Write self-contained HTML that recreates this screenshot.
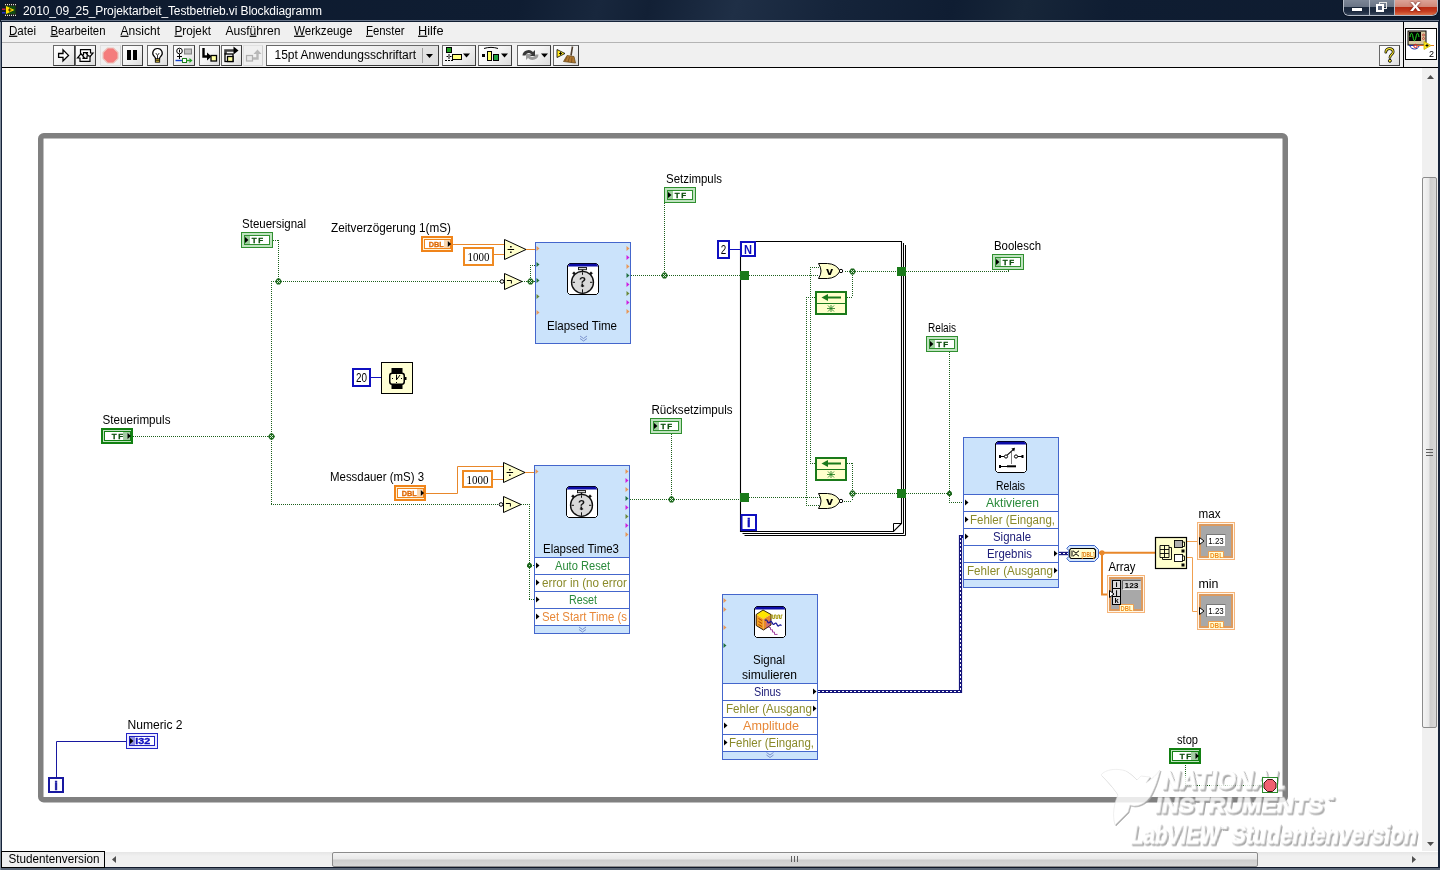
<!DOCTYPE html>
<html lang="de">
<head>
<meta charset="utf-8">
<title>2010_09_25_Projektarbeit_Testbetrieb.vi Blockdiagramm</title>
<style>
html,body{margin:0;padding:0;width:1440px;height:870px;overflow:hidden;background:#fff;font-family:"Liberation Sans", sans-serif;font-size:12px;color:#000}
#win{position:absolute;left:0;top:0;width:1440px;height:870px;background:#16233a;overflow:hidden}
#title{position:absolute;left:0;top:0;width:1440px;height:22px;background:linear-gradient(105deg,#0d1a2e 0%,#0f1d32 36%,#18273d 41.500%,#122035 45%,#1f2f46 51%,#15243a 58%,#0f1d32 66%,#172639 71%,#0f1d32 77%,#0e1b2f 100%)}
#title:after{content:"";position:absolute;left:1px;top:20px;width:1438px;height:1px;background:#6c788c}
#menubar{position:absolute;left:2px;top:22px;width:1402px;height:20px;background:#f0f0f0}
#toolbar{position:absolute;left:2px;top:42px;width:1402px;height:25px;background:#f0f0f0;border-top:1px solid #b4b4b4;box-sizing:border-box}
#blackline{position:absolute;left:2px;top:67px;width:1436px;height:1px;background:#000}
#canvas{position:absolute;left:2px;top:68px;width:1420px;height:784px;background:#fff}
svg text{font-family:"Liberation Sans", sans-serif}
#diagram,#menubar,#toolbar,#hscroll,#title,#iconpane{will-change:transform}

#botedge{position:absolute;left:0;top:868px;width:1440px;height:2px;background:#5a6676}
#leftedge{position:absolute;left:0;top:22px;width:1px;height:848px;background:#7c8898}
#title .cap{position:absolute;left:23px;top:4px;color:#fff;font-size:12px;white-space:nowrap;letter-spacing:-0.100px}
#wbtn{position:absolute;left:1343px;top:0;width:95px;height:16px;border:1px solid #b4bcc8;border-top:none;border-radius:0 0 6px 6px;box-sizing:border-box;overflow:hidden;display:flex;box-shadow:0 0 0 1px #0a1424}
#wbtn .wb{height:15px;position:relative;box-sizing:border-box}
#wbtn .min{width:26px;background:linear-gradient(#7c8696 0,#6a7586 44%,#1a283c 50%,#1e2c42 80%,#3a485c 100%);border-right:1px solid #b4bcc8}
#wbtn .max{width:25px;background:linear-gradient(#7c8696 0,#6a7586 44%,#1a283c 50%,#1e2c42 80%,#3a485c 100%);border-right:1px solid #b4bcc8}
#wbtn .cls{width:42px;background:linear-gradient(#dca498 0,#d08878 44%,#b82c14 50%,#c43c20 75%,#dc7048 100%)}
#wbtn .min i{position:absolute;left:8px;top:8px;width:10px;height:3px;background:#fff;box-shadow:0 0 1px #000}
#wbtn .max i{position:absolute;left:9px;top:2px;width:8px;height:7px;border:1.500px solid #e4e4e4;box-sizing:border-box}
#wbtn .max b{position:absolute;left:6px;top:4px;width:8px;height:8px;border:2px solid #fff;box-sizing:border-box;background:#56627a}
#wbtn .cls span{position:absolute;left:15px;top:-2px;line-height:16px;color:#fff;font-weight:bold;font-size:17px;text-shadow:0 0 2px #500;transform:scaleX(1.150);transform-origin:0 0}
#menubar .mi{position:absolute;top:1px;height:16px;line-height:16px;white-space:nowrap;font-size:12px}
.tb{position:absolute;top:2px;height:21px;box-sizing:border-box;border:1px solid;border-color:#686868 #3c3c3c #3c3c3c #686868;background:linear-gradient(135deg,#ffffff 0%,#f4f4f4 50%,#dcdcdc 100%);overflow:hidden}
.tb svg{position:absolute;left:-1px;top:-1px}
.tb.flat{border-color:#e0e0e0 #d0d0d0 #d0d0d0 #e0e0e0;background:#f0f0f0}
.tb.font span{position:absolute;left:8px;top:2px;font-size:12px;white-space:nowrap;display:inline-block;width:142px}
.tb.font em{position:absolute;left:155px;top:2px;width:1px;height:15px;background:#a0a0a0}
#iconpane{position:absolute;left:1403px;top:22px;width:35px;height:46px;background:#f0f0f0;border-left:1px solid #000;box-sizing:border-box}
#viicon{position:absolute;left:1px;top:6px;width:32px;height:32px;border:1px solid #000;background:#fff;box-sizing:border-box;overflow:hidden}
#vscroll{position:absolute;left:1422px;top:68px;width:16px;height:783px;background:#f0f0f0}
#vscroll .thumb{position:absolute;left:0;top:109px;width:15px;height:551px;border:1px solid #8c8c8c;border-radius:2px;box-sizing:border-box;background:linear-gradient(90deg,#f4f4f4 0,#e8e8e8 48%,#cdcdcd 52%,#d8d8d8 100%)}
#vscroll .thumb i{position:absolute;left:3px;top:271px;width:7px;height:7px;background:repeating-linear-gradient(#606060 0 1px,transparent 1px 3px)}
#vscroll .au{position:absolute;left:5px;top:7px}
#vscroll .ad{position:absolute;left:5px;top:774px}
#hscroll{position:absolute;left:2px;top:851px;width:1436px;height:16px;background:linear-gradient(#fff 0,#fff 1px,#e6e6e6 1px,#f0f0f0 5px,#f0f0f0 100%);border-bottom:1px solid #10182a}
#hscroll .tab{position:absolute;left:-1px;top:0;width:104px;height:17px;border:1px solid #000;box-sizing:border-box;background:#f0f0f0;overflow:hidden}
#hscroll .tab svg{position:absolute;left:0;top:-1px}
#hscroll .thumb{position:absolute;left:330px;top:1px;width:926px;height:15px;border:1px solid #8c8c8c;border-radius:2px;box-sizing:border-box;background:linear-gradient(#f4f4f4 0,#e8e8e8 48%,#cdcdcd 52%,#d8d8d8 100%)}
#hscroll .thumb i{position:absolute;left:458px;top:3px;width:7px;height:6px;background:repeating-linear-gradient(90deg,#606060 0 1px,transparent 1px 3px)}
#hscroll .al{position:absolute;left:110px;top:5px}
#hscroll .ar{position:absolute;left:1410px;top:5px}

</style>
</head>
<body>
<div id="win">
<div id="canvas"></div>
<svg id="diagram" width="1440" height="870" viewBox="0 0 1440 870" style="position:absolute;left:0;top:0">
<rect x="40.750" y="135.750" width="1244.500" height="664" rx="3" ry="3" fill="none" stroke="#808080" stroke-width="5.500"/>
<path d="M744.500 535.500H905.500V245M742.500 533.500H903.500V243" fill="none" stroke="#000" stroke-width="1"/>
<path d="M740.500 241.500H901.500V523.500L893.500 531.500H740.500z" fill="#fff" stroke="#000" stroke-width="1.100"/>
<path d="M893.500 531.500V523.500H901.500" fill="none" stroke="#000" stroke-width="1"/>
<line x1="273" y1="240.5" x2="279" y2="240.5" stroke="#1c601c" stroke-width="1" stroke-dasharray="1 1"/>
<line x1="278.5" y1="240" x2="278.5" y2="281" stroke="#1c601c" stroke-width="1" stroke-dasharray="1 1"/>
<line x1="271" y1="281.5" x2="501" y2="281.5" stroke="#1c601c" stroke-width="1" stroke-dasharray="1 1"/>
<line x1="271.5" y1="281" x2="271.5" y2="505" stroke="#1c601c" stroke-width="1" stroke-dasharray="1 1"/>
<line x1="271" y1="504.5" x2="500" y2="504.5" stroke="#1c601c" stroke-width="1" stroke-dasharray="1 1"/>
<path d="M275.0 281.5 L277.0 278.5 L280.0 278.5 L282.0 281.5 L280.0 284.5 L277.0 284.5z" fill="#1b661b"/>
<rect x="278" y="281" width="1" height="1" fill="#cfeacf"/>
<rect x="277" y="280" width="1" height="1" fill="#cfeacf"/>
<rect x="279" y="280" width="1" height="1" fill="#cfeacf"/>
<rect x="277" y="282" width="1" height="1" fill="#cfeacf"/>
<rect x="279" y="282" width="1" height="1" fill="#cfeacf"/>
<line x1="133" y1="436.5" x2="271" y2="436.5" stroke="#1c601c" stroke-width="1" stroke-dasharray="1 1"/>
<path d="M268.0 436.5 L270.0 433.5 L273.0 433.5 L275.0 436.5 L273.0 439.5 L270.0 439.5z" fill="#1b661b"/>
<rect x="271" y="436" width="1" height="1" fill="#cfeacf"/>
<rect x="270" y="435" width="1" height="1" fill="#cfeacf"/>
<rect x="272" y="435" width="1" height="1" fill="#cfeacf"/>
<rect x="270" y="437" width="1" height="1" fill="#cfeacf"/>
<rect x="272" y="437" width="1" height="1" fill="#cfeacf"/>
<path d="M453 244.5 L504 244.5" fill="none" stroke="#e8872a" stroke-width="1"/>
<path d="M494 254.5 L504 254.5" fill="none" stroke="#e8872a" stroke-width="1"/>
<path d="M525 249.5 L536 249.5" fill="none" stroke="#e8872a" stroke-width="1"/>
<line x1="522" y1="281.5" x2="536" y2="281.5" stroke="#1c601c" stroke-width="1" stroke-dasharray="1 1"/>
<line x1="530.5" y1="265" x2="530.5" y2="281" stroke="#1c601c" stroke-width="1" stroke-dasharray="1 1"/>
<line x1="530" y1="265.5" x2="536" y2="265.5" stroke="#1c601c" stroke-width="1" stroke-dasharray="1 1"/>
<path d="M527.0 281.5 L529.0 278.5 L532.0 278.5 L534.0 281.5 L532.0 284.5 L529.0 284.5z" fill="#1b661b"/>
<rect x="530" y="281" width="1" height="1" fill="#cfeacf"/>
<rect x="529" y="280" width="1" height="1" fill="#cfeacf"/>
<rect x="531" y="280" width="1" height="1" fill="#cfeacf"/>
<rect x="529" y="282" width="1" height="1" fill="#cfeacf"/>
<rect x="531" y="282" width="1" height="1" fill="#cfeacf"/>
<line x1="631" y1="275.5" x2="741" y2="275.5" stroke="#1c601c" stroke-width="1" stroke-dasharray="1 1"/>
<line x1="664.5" y1="203" x2="664.5" y2="275" stroke="#1c601c" stroke-width="1" stroke-dasharray="1 1"/>
<path d="M661.0 275.5 L663.0 272.5 L666.0 272.5 L668.0 275.5 L666.0 278.5 L663.0 278.5z" fill="#1b661b"/>
<rect x="664" y="275" width="1" height="1" fill="#cfeacf"/>
<rect x="663" y="274" width="1" height="1" fill="#cfeacf"/>
<rect x="665" y="274" width="1" height="1" fill="#cfeacf"/>
<rect x="663" y="276" width="1" height="1" fill="#cfeacf"/>
<rect x="665" y="276" width="1" height="1" fill="#cfeacf"/>
<line x1="749" y1="275.5" x2="819" y2="275.5" stroke="#1c601c" stroke-width="1" stroke-dasharray="1 1"/>
<line x1="810" y1="267.5" x2="820" y2="267.5" stroke="#1c601c" stroke-width="1" stroke-dasharray="1 1"/>
<line x1="810.5" y1="267" x2="810.5" y2="463" stroke="#1c601c" stroke-width="1" stroke-dasharray="1 1"/>
<line x1="810" y1="463.5" x2="816" y2="463.5" stroke="#1c601c" stroke-width="1" stroke-dasharray="1 1"/>
<line x1="845" y1="271.5" x2="897" y2="271.5" stroke="#1c601c" stroke-width="1" stroke-dasharray="1 1"/>
<line x1="852.5" y1="271" x2="852.5" y2="297" stroke="#1c601c" stroke-width="1" stroke-dasharray="1 1"/>
<line x1="847" y1="297.5" x2="852" y2="297.5" stroke="#1c601c" stroke-width="1" stroke-dasharray="1 1"/>
<line x1="806" y1="297.5" x2="816" y2="297.5" stroke="#1c601c" stroke-width="1" stroke-dasharray="1 1"/>
<line x1="806.5" y1="297" x2="806.5" y2="505" stroke="#1c601c" stroke-width="1" stroke-dasharray="1 1"/>
<line x1="806" y1="505.5" x2="820" y2="505.5" stroke="#1c601c" stroke-width="1" stroke-dasharray="1 1"/>
<line x1="847" y1="463.5" x2="853" y2="463.5" stroke="#1c601c" stroke-width="1" stroke-dasharray="1 1"/>
<line x1="852.5" y1="463" x2="852.5" y2="501" stroke="#1c601c" stroke-width="1" stroke-dasharray="1 1"/>
<line x1="844" y1="501.5" x2="852" y2="501.5" stroke="#1c601c" stroke-width="1" stroke-dasharray="1 1"/>
<line x1="749" y1="497.5" x2="820" y2="497.5" stroke="#1c601c" stroke-width="1" stroke-dasharray="1 1"/>
<line x1="852" y1="493.5" x2="897" y2="493.5" stroke="#1c601c" stroke-width="1" stroke-dasharray="1 1"/>
<path d="M849.0 271.5 L851.0 268.5 L854.0 268.5 L856.0 271.5 L854.0 274.5 L851.0 274.5z" fill="#1b661b"/>
<rect x="852" y="271" width="1" height="1" fill="#cfeacf"/>
<rect x="851" y="270" width="1" height="1" fill="#cfeacf"/>
<rect x="853" y="270" width="1" height="1" fill="#cfeacf"/>
<rect x="851" y="272" width="1" height="1" fill="#cfeacf"/>
<rect x="853" y="272" width="1" height="1" fill="#cfeacf"/>
<path d="M849.0 493.5 L851.0 490.5 L854.0 490.5 L856.0 493.5 L854.0 496.5 L851.0 496.5z" fill="#1b661b"/>
<rect x="852" y="493" width="1" height="1" fill="#cfeacf"/>
<rect x="851" y="492" width="1" height="1" fill="#cfeacf"/>
<rect x="853" y="492" width="1" height="1" fill="#cfeacf"/>
<rect x="851" y="494" width="1" height="1" fill="#cfeacf"/>
<rect x="853" y="494" width="1" height="1" fill="#cfeacf"/>
<line x1="906" y1="271.5" x2="1009" y2="271.5" stroke="#1c601c" stroke-width="1" stroke-dasharray="1 1"/>
<line x1="1008.5" y1="268" x2="1008.5" y2="271" stroke="#1c601c" stroke-width="1" stroke-dasharray="1 1"/>
<line x1="906" y1="493.5" x2="950" y2="493.5" stroke="#1c601c" stroke-width="1" stroke-dasharray="1 1"/>
<path d="M948.5 491.0 h2 l1.500 1.500 v2 l-1.500 1.500 h-2 l-1.500 -1.500 v-2z" fill="#1b661b"/>
<rect x="949" y="493" width="1" height="1" fill="#cfeacf"/>
<line x1="949.5" y1="352" x2="949.5" y2="502" stroke="#1c601c" stroke-width="1" stroke-dasharray="1 1"/>
<line x1="949" y1="502.5" x2="964" y2="502.5" stroke="#1c601c" stroke-width="1" stroke-dasharray="1 1"/>
<path d="M426 493.5 L457.5 493.5 L457.5 466.5 L503 466.5" fill="none" stroke="#e8872a" stroke-width="1"/>
<path d="M493 479.5 L503 479.5" fill="none" stroke="#e8872a" stroke-width="1"/>
<path d="M524 472.5 L535 472.5" fill="none" stroke="#e8872a" stroke-width="1"/>
<line x1="521" y1="504.5" x2="530" y2="504.5" stroke="#1c601c" stroke-width="1" stroke-dasharray="1 1"/>
<line x1="529.5" y1="504" x2="529.5" y2="599" stroke="#1c601c" stroke-width="1" stroke-dasharray="1 1"/>
<line x1="529" y1="599.5" x2="535" y2="599.5" stroke="#1c601c" stroke-width="1" stroke-dasharray="1 1"/>
<line x1="529" y1="565.5" x2="535" y2="565.5" stroke="#1c601c" stroke-width="1" stroke-dasharray="1 1"/>
<path d="M528.5 563.0 h2 l1.500 1.500 v2 l-1.500 1.500 h-2 l-1.500 -1.500 v-2z" fill="#1b661b"/>
<rect x="529" y="565" width="1" height="1" fill="#cfeacf"/>
<line x1="630" y1="499.5" x2="741" y2="499.5" stroke="#1c601c" stroke-width="1" stroke-dasharray="1 1"/>
<line x1="671.5" y1="434" x2="671.5" y2="499" stroke="#1c601c" stroke-width="1" stroke-dasharray="1 1"/>
<path d="M668.0 499.5 L670.0 496.5 L673.0 496.5 L675.0 499.5 L673.0 502.5 L670.0 502.5z" fill="#1b661b"/>
<rect x="671" y="499" width="1" height="1" fill="#cfeacf"/>
<rect x="670" y="498" width="1" height="1" fill="#cfeacf"/>
<rect x="672" y="498" width="1" height="1" fill="#cfeacf"/>
<rect x="670" y="500" width="1" height="1" fill="#cfeacf"/>
<rect x="672" y="500" width="1" height="1" fill="#cfeacf"/>
<path d="M370 377.5 L382 377.5" fill="none" stroke="#1010c0" stroke-width="1"/>
<path d="M730 249.5 L741 249.5" fill="none" stroke="#1010c0" stroke-width="1"/>
<path d="M56.5 778 L56.5 741.5 L127 741.5" fill="none" stroke="#1818a0" stroke-width="1"/>
<line x1="1185.5" y1="763" x2="1185.5" y2="785" stroke="#1c601c" stroke-width="1" stroke-dasharray="1 1"/>
<line x1="1185" y1="785.5" x2="1263" y2="785.5" stroke="#1c601c" stroke-width="1" stroke-dasharray="1 1"/>
<path d="M818 691.5 L960.5 691.5 L960.5 536.5 L964 536.5" fill="none" stroke="#15157c" stroke-width="3.2" stroke-linejoin="miter"/>
<path d="M818 691.5 L960.5 691.5 L960.5 536.5 L964 536.5" fill="none" stroke="#fff" stroke-width="1" stroke-dasharray="2 2"/>
<path d="M1059 553.5 L1068 553.5" fill="none" stroke="#1a1a80" stroke-width="3.4"/>
<path d="M1059 553.5 L1068 553.5" fill="none" stroke="#fff" stroke-width="1" stroke-dasharray="2 2"/>
<path d="M1099 552.75 L1156 552.75" fill="none" stroke="#e8872a" stroke-width="2"/>
<path d="M1102 552.75 L1102 594.5 L1110 594.5" fill="none" stroke="#e8872a" stroke-width="2"/>
<circle cx="1102" cy="552.750" r="2.600" fill="#e8872a"/>
<path d="M1187 541.5 L1200 541.5" fill="none" stroke="#f0a050" stroke-width="1"/>
<path d="M1187 557.5 L1192.5 557.5 L1192.5 611.5 L1200 611.5" fill="none" stroke="#f0a050" stroke-width="1"/>
<text x="242" y="227.5" font-size="12" fill="#000" text-anchor="start" font-weight="normal" textLength="64" lengthAdjust="spacingAndGlyphs">Steuersignal</text>
<rect x="241.5" y="232.5" width="31" height="15" fill="#bfe3bf" stroke="#2f8f2f" stroke-width="1"/>
<rect x="244.5" y="235.5" width="25" height="9" fill="#fff" stroke="#2f8f2f" stroke-width="1"/>
<rect x="245" y="236" width="5" height="8" fill="#9ccf9c"/>
<path d="M245 237 l3.500 3 l-3.500 3z" fill="#000"/>
<text x="251.7" y="243" font-size="8" fill="#0f500f" text-anchor="start" font-weight="bold" letter-spacing="1.600" stroke="#0f500f" stroke-width="0.300">TF</text>
<text x="102.5" y="423.5" font-size="12" fill="#000" text-anchor="start" font-weight="normal" textLength="68" lengthAdjust="spacingAndGlyphs">Steuerimpuls</text>
<rect x="102" y="429" width="30" height="14" fill="#bfe3bf" stroke="#128012" stroke-width="2"/>
<rect x="104.5" y="431.5" width="26" height="9" fill="#fff" stroke="#128012" stroke-width="1"/>
<rect x="123" y="432" width="7" height="8" fill="#a4cca4"/>
<path d="M127.5 433 l3.500 3 l-3.500 3z" fill="#000"/>
<text x="111.7" y="439" font-size="8" fill="#0f500f" text-anchor="start" font-weight="bold" letter-spacing="1.600" stroke="#0f500f" stroke-width="0.300">TF</text>
<text x="331" y="232" font-size="12" fill="#000" text-anchor="start" font-weight="normal" textLength="120" lengthAdjust="spacingAndGlyphs">Zeitverzögerung 1(mS)</text>
<rect x="422" y="237" width="30" height="14" fill="#fff2d4" stroke="#f0841a" stroke-width="2"/>
<rect x="424.5" y="239.5" width="26" height="9" fill="#fff" stroke="#f0841a" stroke-width="1"/>
<rect x="444" y="240" width="6" height="8" fill="#fad6ae"/>
<path d="M447.8 241 l3.300 3 l-3.300 3z" fill="#000"/>
<text x="428.8" y="247" font-size="8" fill="#e06800" text-anchor="start" font-weight="bold" textLength="15" lengthAdjust="spacingAndGlyphs" stroke="#e06800" stroke-width="0.300">DBL</text>
<rect x="464.0" y="248.0" width="29" height="17" fill="#fff" stroke="#ef8a22" stroke-width="2"/>
<text x="478.5" y="261.0" font-size="13.5" fill="#000" text-anchor="middle" font-weight="normal" textLength="22" lengthAdjust="spacingAndGlyphs" style="font-family:'Liberation Serif',serif">1000</text>
<path d="M504.5 239.5 L526 249.5 L504.5 259.5z" fill="#ffffcc" stroke="#000" stroke-width="1"/>
<path d="M507.6 249.5h6.500" stroke="#000" stroke-width="1"/><rect x="510.1" y="246.0" width="1.500" height="1.500" fill="#000"/><rect x="510.1" y="251.5" width="1.500" height="1.500" fill="#000"/>
<path d="M504.5 273.5 L522 281.5 L504.5 289.5z" fill="#ffffcc" stroke="#000" stroke-width="1"/>
<path d="M506.9 280.5h4.500v3" stroke="#000" stroke-width="1" fill="none"/>
<circle cx="502" cy="281.500" r="1.800" fill="#fff" stroke="#000" stroke-width="1"/>
<rect x="535.5" y="242.5" width="95" height="101" fill="#cbe3fb" stroke="#4466cc" stroke-width="1"/>
<text x="547" y="330" font-size="12" fill="#000" text-anchor="start" font-weight="normal" textLength="70" lengthAdjust="spacingAndGlyphs">Elapsed Time</text>
<path d="M569.5 263.5 H596.5 L598.5 265.5 V292.5 L596.5 294.5 H569.5 L567.5 292.5 V265.5z" fill="#fff" stroke="#000" stroke-width="1"/>
<path d="M568 266.4 V265.6 L569.7 263.7 H596.3 L598 265.6 V266.4z" fill="#0c0ca8"/>
<circle cx="582.5" cy="282.3" r="11" fill="#dadada" stroke="#101010" stroke-width="1.300"/>
<rect x="578.5" y="267.5" width="8" height="2.200" fill="#d8d8d8" stroke="#101010" stroke-width="0.900"/><path d="M582.5 269.7v2" stroke="#101010" stroke-width="1.400"/>
<path d="M572.5 273.3 l1.500 -1.500 l1.500 1.500 l-1.500 1.500z M589.5 273.3 l1.500 -1.500 l1.500 1.500 l-1.500 1.500z" fill="#101010" stroke="#101010" stroke-width="0.600"/>
<path d="M582.5 272.3v2.500M582.5 289.3v3.500M572.5 282.3h2.500M590.0 282.3h2.500" stroke="#101010" stroke-width="1"/>
<path d="M580.5 285.90000000000003 l2 -1.300 l2 1.300 l-2 1.300z" fill="#101010"/>
<text x="582.5" y="284.6" font-size="11.5" fill="#101010" text-anchor="middle" font-weight="bold">?</text>
<path d="M580.0 336 l3.500 2.500 l3.500 -2.500 M580.0 338.5 l3.500 2.500 l3.500 -2.500" fill="none" stroke="#7088c8" stroke-width="0.900"/>
<path d="M536.5 245.9 l3 2.600 l-3 2.600z" fill="#e89858"/>
<path d="M536.5 261.9 l3 2.600 l-3 2.600z" fill="#207040"/>
<path d="M536.5 277.9 l3 2.600 l-3 2.600z" fill="#207040"/>
<path d="M536.5 293.9 l3 2.600 l-3 2.600z" fill="#6a8a3a"/>
<path d="M536.5 309.9 l3 2.600 l-3 2.600z" fill="#e89858"/>
<path d="M626.5 245.9 l3 2.600 l-3 2.600z" fill="#e89858"/>
<path d="M626.5 254.9 l3 2.600 l-3 2.600z" fill="#d020e0"/>
<path d="M626.5 263.9 l3 2.600 l-3 2.600z" fill="#e89858"/>
<path d="M626.5 272.9 l3 2.600 l-3 2.600z" fill="#207040"/>
<path d="M626.5 281.9 l3 2.600 l-3 2.600z" fill="#d020e0"/>
<path d="M626.5 290.9 l3 2.600 l-3 2.600z" fill="#6a8a3a"/>
<path d="M626.5 299.9 l3 2.600 l-3 2.600z" fill="#d020e0"/>
<path d="M626.5 308.9 l3 2.600 l-3 2.600z" fill="#e89858"/>
<text x="666" y="183" font-size="12" fill="#000" text-anchor="start" font-weight="normal" textLength="56" lengthAdjust="spacingAndGlyphs">Setzimpuls</text>
<rect x="664.5" y="187.5" width="31" height="15" fill="#bfe3bf" stroke="#2f8f2f" stroke-width="1"/>
<rect x="667.5" y="190.5" width="25" height="9" fill="#fff" stroke="#2f8f2f" stroke-width="1"/>
<rect x="668" y="191" width="5" height="8" fill="#9ccf9c"/>
<path d="M668 192 l3.500 3 l-3.500 3z" fill="#000"/>
<text x="674.7" y="198" font-size="8" fill="#0f500f" text-anchor="start" font-weight="bold" letter-spacing="1.600" stroke="#0f500f" stroke-width="0.300">TF</text>
<rect x="353.0" y="369.0" width="17" height="17" fill="#fff" stroke="#1010c0" stroke-width="2"/>
<text x="361.5" y="382.0" font-size="12" fill="#000" text-anchor="middle" font-weight="normal" textLength="11" lengthAdjust="spacingAndGlyphs">20</text>
<rect x="381.500" y="362.500" width="31" height="31" fill="#ffffd4" stroke="#000" stroke-width="1"/>
<rect x="391.500" y="368" width="11" height="21" fill="#000"/><rect x="389.750" y="373.250" width="14.500" height="11" rx="2.500" fill="#ffffd4" stroke="#000" stroke-width="1.500"/><rect x="405" y="377" width="1.500" height="3" fill="#000"/>
<path d="M396.500 380v-5.500M396.800 379.500l3.200-4.500" stroke="#000" stroke-width="1" fill="none"/><rect x="392" y="378" width="1" height="1" fill="#000"/><rect x="401" y="378" width="1" height="1" fill="#000"/><rect x="396" y="382" width="1" height="1" fill="#000"/>
<rect x="718.0" y="241.0" width="11" height="17" fill="#fff" stroke="#1010c0" stroke-width="2"/>
<text x="723.5" y="254.0" font-size="12" fill="#000" text-anchor="middle" font-weight="normal" textLength="5.5" lengthAdjust="spacingAndGlyphs">2</text>
<rect x="741" y="242" width="14" height="14" fill="#fff" stroke="#1010c0" stroke-width="2"/>
<text x="748" y="253.5" font-size="12" fill="#1010c0" text-anchor="middle" font-weight="bold" textLength="8" lengthAdjust="spacingAndGlyphs">N</text>
<rect x="741.500" y="515" width="14.500" height="15" fill="#fff" stroke="#1010c0" stroke-width="2"/>
<text x="748.7" y="527" font-size="13" fill="#1010c0" text-anchor="middle" font-weight="bold" stroke="#1010c0" stroke-width="0.500">i</text>
<rect x="740" y="271" width="9" height="9" fill="#1a7a1a"/>
<rect x="897" y="267" width="9" height="9" fill="#1a7a1a"/>
<rect x="740" y="493" width="9" height="9" fill="#1a7a1a"/>
<rect x="897" y="489" width="9" height="9" fill="#1a7a1a"/>
<path d="M818.5 263.5 h9 q9 0.500 12.500 7.500 q-3.500 7 -12.500 7.500 h-9 q5 -7.500 0 -15z" fill="#ffffcc" stroke="#000" stroke-width="1"/>
<circle cx="841" cy="271" r="1.700" fill="#fff" stroke="#000" stroke-width="1"/>
<text x="829.5" y="274.5" font-size="11" fill="#000" text-anchor="middle" font-weight="bold" style="font-family:'DejaVu Sans',sans-serif">v</text>
<path d="M818.5 493.5 h9 q9 0.500 12.500 7.500 q-3.500 7 -12.500 7.500 h-9 q5 -7.500 0 -15z" fill="#ffffcc" stroke="#000" stroke-width="1"/>
<circle cx="841" cy="501" r="1.700" fill="#fff" stroke="#000" stroke-width="1"/>
<text x="829.5" y="504.5" font-size="11" fill="#000" text-anchor="middle" font-weight="bold" style="font-family:'DejaVu Sans',sans-serif">v</text>
<rect x="816" y="292" width="30" height="22" fill="#ffffcc" stroke="#1a7a1a" stroke-width="2"/>
<path d="M816 303.5h30" stroke="#1a7a1a" stroke-width="1"/>
<path d="M841 297.5h-14" stroke="#1a7a1a" stroke-width="2"/><path d="M828 294 l-6.500 3.500 l6.500 3.500z" fill="#1a7a1a"/>
<path d="M827 308.5h8M831 305v7M828 305.5l6 6M834 305.5l-6 6" stroke="#1a7a1a" stroke-width="0.800"/>
<rect x="816" y="458" width="30" height="22" fill="#ffffcc" stroke="#1a7a1a" stroke-width="2"/>
<path d="M816 469.5h30" stroke="#1a7a1a" stroke-width="1"/>
<path d="M841 463.5h-14" stroke="#1a7a1a" stroke-width="2"/><path d="M828 460 l-6.500 3.500 l6.500 3.500z" fill="#1a7a1a"/>
<path d="M827 474.5h8M831 471v7M828 471.5l6 6M834 471.5l-6 6" stroke="#1a7a1a" stroke-width="0.800"/>
<text x="994" y="250" font-size="12" fill="#000" text-anchor="start" font-weight="normal" textLength="47" lengthAdjust="spacingAndGlyphs">Boolesch</text>
<rect x="992.5" y="254.5" width="31" height="15" fill="#bfe3bf" stroke="#2f8f2f" stroke-width="1"/>
<rect x="995.5" y="257.5" width="25" height="9" fill="#fff" stroke="#2f8f2f" stroke-width="1"/>
<rect x="996" y="258" width="5" height="8" fill="#9ccf9c"/>
<path d="M996 259 l3.500 3 l-3.500 3z" fill="#000"/>
<text x="1002.7" y="265" font-size="8" fill="#0f500f" text-anchor="start" font-weight="bold" letter-spacing="1.600" stroke="#0f500f" stroke-width="0.300">TF</text>
<text x="928" y="331.5" font-size="12" fill="#000" text-anchor="start" font-weight="normal" textLength="28" lengthAdjust="spacingAndGlyphs">Relais</text>
<rect x="926.5" y="336.5" width="31" height="15" fill="#bfe3bf" stroke="#2f8f2f" stroke-width="1"/>
<rect x="929.5" y="339.5" width="25" height="9" fill="#fff" stroke="#2f8f2f" stroke-width="1"/>
<rect x="930" y="340" width="5" height="8" fill="#9ccf9c"/>
<path d="M930 341 l3.500 3 l-3.500 3z" fill="#000"/>
<text x="936.7" y="347" font-size="8" fill="#0f500f" text-anchor="start" font-weight="bold" letter-spacing="1.600" stroke="#0f500f" stroke-width="0.300">TF</text>
<text x="651.5" y="413.5" font-size="12" fill="#000" text-anchor="start" font-weight="normal" textLength="81" lengthAdjust="spacingAndGlyphs">Rücksetzimpuls</text>
<rect x="650.5" y="418.5" width="31" height="15" fill="#bfe3bf" stroke="#2f8f2f" stroke-width="1"/>
<rect x="653.5" y="421.5" width="25" height="9" fill="#fff" stroke="#2f8f2f" stroke-width="1"/>
<rect x="654" y="422" width="5" height="8" fill="#9ccf9c"/>
<path d="M654 423 l3.500 3 l-3.500 3z" fill="#000"/>
<text x="660.7" y="429" font-size="8" fill="#0f500f" text-anchor="start" font-weight="bold" letter-spacing="1.600" stroke="#0f500f" stroke-width="0.300">TF</text>
<text x="330" y="480.5" font-size="12" fill="#000" text-anchor="start" font-weight="normal" textLength="94" lengthAdjust="spacingAndGlyphs">Messdauer (mS) 3</text>
<rect x="395" y="486" width="30" height="14" fill="#fff2d4" stroke="#f0841a" stroke-width="2"/>
<rect x="397.5" y="488.5" width="26" height="9" fill="#fff" stroke="#f0841a" stroke-width="1"/>
<rect x="417" y="489" width="6" height="8" fill="#fad6ae"/>
<path d="M420.8 490 l3.300 3 l-3.300 3z" fill="#000"/>
<text x="401.8" y="496" font-size="8" fill="#e06800" text-anchor="start" font-weight="bold" textLength="15" lengthAdjust="spacingAndGlyphs" stroke="#e06800" stroke-width="0.300">DBL</text>
<rect x="463.0" y="471.0" width="29" height="16" fill="#fff" stroke="#ef8a22" stroke-width="2"/>
<text x="477.5" y="483.5" font-size="13.5" fill="#000" text-anchor="middle" font-weight="normal" textLength="22" lengthAdjust="spacingAndGlyphs" style="font-family:'Liberation Serif',serif">1000</text>
<path d="M503.5 462.5 L525 472.5 L503.5 482.5z" fill="#ffffcc" stroke="#000" stroke-width="1"/>
<path d="M506.6 472.5h6.500" stroke="#000" stroke-width="1"/><rect x="509.1" y="469.0" width="1.500" height="1.500" fill="#000"/><rect x="509.1" y="474.5" width="1.500" height="1.500" fill="#000"/>
<path d="M503.5 496.5 L521 504.5 L503.5 512.5z" fill="#ffffcc" stroke="#000" stroke-width="1"/>
<path d="M505.9 503.5h4.500v3" stroke="#000" stroke-width="1" fill="none"/>
<circle cx="501" cy="504.500" r="1.800" fill="#fff" stroke="#000" stroke-width="1"/>
<rect x="534.5" y="465.5" width="95" height="168" fill="#cbe3fb" stroke="#4466cc" stroke-width="1"/>
<rect x="534.5" y="557.5" width="95" height="17" fill="#fff" stroke="#4466cc" stroke-width="1"/>
<text x="555" y="570" font-size="12" fill="#2a8a3a" text-anchor="start" font-weight="normal" textLength="55" lengthAdjust="spacingAndGlyphs">Auto Reset</text>
<path d="M536 562.5 l3.500 3 l-3.500 3z" fill="#000"/>
<rect x="534.5" y="574.5" width="95" height="17" fill="#fff" stroke="#4466cc" stroke-width="1"/>
<text x="542" y="587" font-size="12" fill="#8a8a2a" text-anchor="start" font-weight="normal" textLength="85" lengthAdjust="spacingAndGlyphs">error in (no error</text>
<path d="M536 579.5 l3.500 3 l-3.500 3z" fill="#000"/>
<rect x="534.5" y="591.5" width="95" height="17" fill="#fff" stroke="#4466cc" stroke-width="1"/>
<text x="569" y="604" font-size="12" fill="#2a8a3a" text-anchor="start" font-weight="normal" textLength="28" lengthAdjust="spacingAndGlyphs">Reset</text>
<path d="M536 596.5 l3.500 3 l-3.500 3z" fill="#000"/>
<rect x="534.5" y="608.5" width="95" height="17" fill="#fff" stroke="#4466cc" stroke-width="1"/>
<text x="542" y="621" font-size="12" fill="#e88838" text-anchor="start" font-weight="normal" textLength="85" lengthAdjust="spacingAndGlyphs">Set Start Time (s</text>
<path d="M536 613.5 l3.500 3 l-3.500 3z" fill="#000"/>
<text x="543" y="553" font-size="12" fill="#000" text-anchor="start" font-weight="normal" textLength="76" lengthAdjust="spacingAndGlyphs">Elapsed Time3</text>
<path d="M568.5 486.5 H595.5 L597.5 488.5 V515.5 L595.5 517.5 H568.5 L566.5 515.5 V488.5z" fill="#fff" stroke="#000" stroke-width="1"/>
<path d="M567 489.4 V488.6 L568.7 486.7 H595.3 L597 488.6 V489.4z" fill="#0c0ca8"/>
<circle cx="581.5" cy="505.3" r="11" fill="#dadada" stroke="#101010" stroke-width="1.300"/>
<rect x="577.5" y="490.5" width="8" height="2.200" fill="#d8d8d8" stroke="#101010" stroke-width="0.900"/><path d="M581.5 492.7v2" stroke="#101010" stroke-width="1.400"/>
<path d="M571.5 496.3 l1.500 -1.500 l1.500 1.500 l-1.500 1.500z M588.5 496.3 l1.500 -1.500 l1.500 1.500 l-1.500 1.500z" fill="#101010" stroke="#101010" stroke-width="0.600"/>
<path d="M581.5 495.3v2.500M581.5 512.3v3.500M571.5 505.3h2.500M589.0 505.3h2.500" stroke="#101010" stroke-width="1"/>
<path d="M579.5 508.90000000000003 l2 -1.300 l2 1.300 l-2 1.300z" fill="#101010"/>
<text x="581.5" y="507.6" font-size="11.5" fill="#101010" text-anchor="middle" font-weight="bold">?</text>
<path d="M579.0 627 l3.500 2.500 l3.500 -2.500 M579.0 629.5 l3.500 2.500 l3.500 -2.500" fill="none" stroke="#7088c8" stroke-width="0.900"/>
<path d="M535.5 468.9 l3 2.600 l-3 2.600z" fill="#e89858"/>
<path d="M625.5 468.9 l3 2.600 l-3 2.600z" fill="#e89858"/>
<path d="M625.5 477.9 l3 2.600 l-3 2.600z" fill="#d020e0"/>
<path d="M625.5 486.9 l3 2.600 l-3 2.600z" fill="#e89858"/>
<path d="M625.5 495.9 l3 2.600 l-3 2.600z" fill="#207040"/>
<path d="M625.5 504.9 l3 2.600 l-3 2.600z" fill="#d020e0"/>
<path d="M625.5 513.9 l3 2.600 l-3 2.600z" fill="#6a8a3a"/>
<path d="M625.5 522.9 l3 2.600 l-3 2.600z" fill="#d020e0"/>
<path d="M625.5 531.9 l3 2.600 l-3 2.600z" fill="#e89858"/>
<rect x="722.5" y="594.5" width="95" height="165" fill="#cbe3fb" stroke="#4466cc" stroke-width="1"/>
<rect x="722.5" y="683.5" width="95" height="17" fill="#fff" stroke="#4466cc" stroke-width="1"/>
<text x="754" y="696" font-size="12" fill="#20207a" text-anchor="start" font-weight="normal" textLength="27" lengthAdjust="spacingAndGlyphs">Sinus</text>
<path d="M813 688.5 l3.500 3 l-3.500 3z" fill="#000"/>
<rect x="722.5" y="700.5" width="95" height="17" fill="#fff" stroke="#4466cc" stroke-width="1"/>
<text x="726" y="713" font-size="12" fill="#8a8a2a" text-anchor="start" font-weight="normal" textLength="86" lengthAdjust="spacingAndGlyphs">Fehler (Ausgang</text>
<path d="M813 705.5 l3.500 3 l-3.500 3z" fill="#000"/>
<rect x="722.5" y="717.5" width="95" height="17" fill="#fff" stroke="#4466cc" stroke-width="1"/>
<text x="743" y="730" font-size="12" fill="#e88838" text-anchor="start" font-weight="normal" textLength="56" lengthAdjust="spacingAndGlyphs">Amplitude</text>
<path d="M724 722.5 l3.500 3 l-3.500 3z" fill="#000"/>
<rect x="722.5" y="734.5" width="95" height="17" fill="#fff" stroke="#4466cc" stroke-width="1"/>
<text x="729" y="747" font-size="12" fill="#8a8a2a" text-anchor="start" font-weight="normal" textLength="85" lengthAdjust="spacingAndGlyphs">Fehler (Eingang,</text>
<path d="M724 739.5 l3.500 3 l-3.500 3z" fill="#000"/>
<text x="753" y="664" font-size="12" fill="#000" text-anchor="start" font-weight="normal" textLength="32" lengthAdjust="spacingAndGlyphs">Signal</text>
<text x="742" y="679" font-size="12" fill="#000" text-anchor="start" font-weight="normal" textLength="55" lengthAdjust="spacingAndGlyphs">simulieren</text>
<path d="M756.5 606.5 H783.5 L785.5 608.5 V635.5 L783.5 637.5 H756.5 L754.5 635.5 V608.5z" fill="#fff" stroke="#000" stroke-width="1"/>
<path d="M755 609.4 V608.6 L756.7 606.7 H783.3 L785 608.6 V609.4z" fill="#0c0ca8"/>
<path d="M763 610 L771 614.500 L763.500 619 L756.200 614.500z" fill="#ffe400"/>
<path d="M756.200 614.500 L763.500 619 V630 L756.200 625.500z" fill="#f2a020"/>
<path d="M763.500 619 L771 614.500 V625 L763.500 630z" fill="#e88828"/>
<path d="M766 622 L771 619 V625 L766 628.500z" fill="#c060a0" opacity="0.600"/>
<path d="M763 610 L771 614.500 V625 L763.500 630 L756.200 625.500 V614.500z" fill="none" stroke="#201000" stroke-width="0.900"/>
<path d="M758.500 618.500l3.500 2M758.500 621.500l3.500 2M758.500 624.500l3.500 2" stroke="#b04000" stroke-width="1"/>
<path d="M771 618.500v-3.500h1.700v3.500h1.700v-3.500h1.700v3.500h1.700v-3.500h1.700v3.500h1.700v-3.500h1.300" fill="none" stroke="#a89a10" stroke-width="1"/>
<path d="M765 620.500 q1.500 -1.500 2.500 1 t2.500 0.500 q1.300 -1.500 2.300 1 t2.400 0.600 q1.300 -1.500 2.300 1 t2.400 0.600 q1.200 -1 2 0.500" fill="none" stroke="#181898" stroke-width="1.300"/>
<path d="M768.500 627.500h2v2.300h2v2.300h2v2.300h3" fill="none" stroke="#a040a0" stroke-width="1"/>
<path d="M766.5 752.5 l3.500 2.500 l3.500 -2.500 M766.5 755.0 l3.500 2.500 l3.500 -2.500" fill="none" stroke="#7088c8" stroke-width="0.900"/>
<path d="M723.5 597.9 l3 2.600 l-3 2.600z" fill="#e89858"/>
<path d="M723.5 606.9 l3 2.600 l-3 2.600z" fill="#e89858"/>
<path d="M723.5 624.9 l3 2.600 l-3 2.600z" fill="#e89858"/>
<path d="M723.5 642.9 l3 2.600 l-3 2.600z" fill="#207040"/>
<rect x="963.5" y="437.5" width="95" height="150" fill="#cbe3fb" stroke="#4466cc" stroke-width="1"/>
<rect x="963.5" y="494.5" width="95" height="17" fill="#fff" stroke="#4466cc" stroke-width="1"/>
<text x="986" y="507" font-size="12" fill="#2a8a3a" text-anchor="start" font-weight="normal" textLength="53" lengthAdjust="spacingAndGlyphs">Aktivieren</text>
<path d="M965 499.5 l3.500 3 l-3.500 3z" fill="#000"/>
<rect x="963.5" y="511.5" width="95" height="17" fill="#fff" stroke="#4466cc" stroke-width="1"/>
<text x="970" y="524" font-size="12" fill="#8a8a2a" text-anchor="start" font-weight="normal" textLength="85" lengthAdjust="spacingAndGlyphs">Fehler (Eingang,</text>
<path d="M965 516.5 l3.500 3 l-3.500 3z" fill="#000"/>
<rect x="963.5" y="528.5" width="95" height="17" fill="#fff" stroke="#4466cc" stroke-width="1"/>
<text x="993" y="541" font-size="12" fill="#20207a" text-anchor="start" font-weight="normal" textLength="38" lengthAdjust="spacingAndGlyphs">Signale</text>
<path d="M965 533.5 l3.500 3 l-3.500 3z" fill="#000"/>
<rect x="963.5" y="545.5" width="95" height="17" fill="#fff" stroke="#4466cc" stroke-width="1"/>
<text x="987" y="558" font-size="12" fill="#20207a" text-anchor="start" font-weight="normal" textLength="45" lengthAdjust="spacingAndGlyphs">Ergebnis</text>
<path d="M1054 550.5 l3.500 3 l-3.500 3z" fill="#000"/>
<rect x="963.5" y="562.5" width="95" height="17" fill="#fff" stroke="#4466cc" stroke-width="1"/>
<text x="967" y="575" font-size="12" fill="#8a8a2a" text-anchor="start" font-weight="normal" textLength="86" lengthAdjust="spacingAndGlyphs">Fehler (Ausgang</text>
<path d="M1054 567.5 l3.500 3 l-3.500 3z" fill="#000"/>
<text x="996" y="490" font-size="12" fill="#000" text-anchor="start" font-weight="normal" textLength="29" lengthAdjust="spacingAndGlyphs">Relais</text>
<path d="M997.5 441.5 H1024.5 L1026.5 443.5 V470.5 L1024.5 472.5 H997.5 L995.5 470.5 V443.5z" fill="#fff" stroke="#000" stroke-width="1"/>
<path d="M996 444.4 V443.6 L997.7 441.7 H1024.3 L1026 443.6 V444.4z" fill="#0c0ca8"/>
<path d="M1000 456.500h4.500M1017.500 456.500h5M1000 466.500h7.500" stroke="#000" stroke-width="1" fill="none"/>
<path d="M1007 466.300h9" stroke="#000" stroke-width="2"/>
<circle cx="1006" cy="456.500" r="1.600" fill="#fff" stroke="#000" stroke-width="1"/><circle cx="1016" cy="456.500" r="1.600" fill="#fff" stroke="#000" stroke-width="1"/>
<path d="M1007.200 455.200L1014 448.800" stroke="#000" stroke-width="1.100"/><path d="M1015 447.800l-3.600 0.800 2.800 2.800z" fill="#000"/>
<path d="M1011.500 452.500v11.500" stroke="#000" stroke-width="1" stroke-dasharray="1 1"/>
<rect x="999" y="455" width="2" height="3" fill="#000"/><rect x="1021.500" y="455" width="2" height="3" fill="#000"/><rect x="999" y="465" width="2" height="3" fill="#000"/>
<path d="M1069.500 545.500H1094.500L1098.500 549.500V557.500L1094.500 561.500H1069.500L1066.800 558.700L1068.800 556.500V550.500L1066.800 548.300z" fill="#d4e6fc" stroke="#3a62c8" stroke-width="1"/>
<path d="M1071 548.500H1094L1095.500 550V557L1094 558.500H1071L1069.700 557V550z" fill="#ffffd0" stroke="#000" stroke-width="1.100"/>
<path d="M1073 550.800l3 2.300 3-2.300M1073 556.200l3-2.300 3 2.300M1072 550.500v6" fill="none" stroke="#000" stroke-width="1"/>
<text x="1081.5" y="556.8" font-size="8" fill="#e07808" text-anchor="start" font-weight="bold" textLength="13" lengthAdjust="spacingAndGlyphs">[DBL]</text>
<rect x="1155.500" y="537.500" width="31" height="31" fill="#ffffcc" stroke="#000" stroke-width="1.200"/>
<path d="M1160 545.500h9v12h-9zM1160 549.500h9M1160 553.500h9M1164.500 545.500v12M1169 547.500h2.500v12h-9v-2" fill="none" stroke="#000" stroke-width="0.900"/>
<rect x="1174.500" y="540.500" width="8" height="7" fill="#b0b0b0" stroke="#000" stroke-width="0.900"/><path d="M1182.500 542h2v4.500h-2" fill="none" stroke="#000" stroke-width="0.900"/><rect x="1181.500" y="549.500" width="3" height="3" fill="#000"/>
<rect x="1174.500" y="554.500" width="8" height="7" fill="#fff" stroke="#000" stroke-width="0.900"/><path d="M1182.500 556h2v4.500h-2" fill="none" stroke="#000" stroke-width="0.900"/><rect x="1181.500" y="563.500" width="3" height="3" fill="#000"/>
<text x="1108.5" y="571" font-size="12" fill="#000" text-anchor="start" font-weight="normal" textLength="27" lengthAdjust="spacingAndGlyphs">Array</text>
<rect x="1107.5" y="575.5" width="37" height="37" fill="#fff6ea" stroke="#f6b478" stroke-width="1"/>
<rect x="1110" y="578" width="32" height="32" fill="#a8a8a8" stroke="#dc9a5e" stroke-width="2"/>
<rect x="1120" y="604.5" width="13" height="7" fill="#ffffd8"/>
<path d="M1119.5 611 v-6.500 h14 v6.500" fill="none" stroke="#f0a050" stroke-width="1"/>
<text x="1120.5" y="611" font-size="7.5" fill="#f08c1c" text-anchor="start" font-weight="bold" textLength="12" lengthAdjust="spacingAndGlyphs">DBL</text>
<rect x="1112.5" y="580.5" width="8" height="8" fill="#dcdcdc" stroke="#000" stroke-width="1"/>
<text x="1116.5" y="587" font-size="7.5" fill="#000" text-anchor="middle" font-weight="bold">i</text>
<rect x="1112.5" y="588.5" width="8" height="8" fill="#dcdcdc" stroke="#000" stroke-width="1"/>
<text x="1116.5" y="595" font-size="7.5" fill="#000" text-anchor="middle" font-weight="bold">j</text>
<rect x="1112.5" y="596.5" width="8" height="8" fill="#dcdcdc" stroke="#000" stroke-width="1"/>
<text x="1116.5" y="603" font-size="7.5" fill="#000" text-anchor="middle" font-weight="bold">k</text>
<path d="M1122.5 589 v-8.500 h18" fill="none" stroke="#606060" stroke-width="1"/>
<rect x="1123" y="581" width="18" height="8" fill="#cccccc"/><path d="M1123 589.5h18" stroke="#e8e8e8" stroke-width="1"/>
<text x="1124.5" y="588" font-size="7.5" fill="#000" text-anchor="start" font-weight="bold" textLength="14" lengthAdjust="spacingAndGlyphs">123</text>
<path d="M1109.5 590.5 l4.500 3.500 l-4.500 3.500z" fill="#fff" stroke="#000" stroke-width="1"/>
<text x="1198.5" y="517.5" font-size="12" fill="#000" text-anchor="start" font-weight="normal" textLength="22" lengthAdjust="spacingAndGlyphs">max</text>
<rect x="1197.5" y="522.5" width="37" height="37" fill="#fff6ea" stroke="#f6b478" stroke-width="1"/>
<rect x="1200" y="525" width="32" height="32" fill="#a8a8a8" stroke="#dc9a5e" stroke-width="2"/>
<rect x="1209" y="551.5" width="15" height="7" fill="#ffffd8"/>
<path d="M1208.5 558 v-6.500 h15 v6.500" fill="none" stroke="#f0a050" stroke-width="1"/>
<text x="1210" y="558" font-size="7.5" fill="#f08c1c" text-anchor="start" font-weight="bold" textLength="13" lengthAdjust="spacingAndGlyphs">DBL</text>
<path d="M1206.5 547 v-12.500 h19" fill="none" stroke="#787878" stroke-width="1"/>
<rect x="1207" y="535" width="18" height="11" fill="#fff"/>
<text x="1208.3" y="544" font-size="9.5" fill="#000" text-anchor="start" font-weight="normal" textLength="15.5" lengthAdjust="spacingAndGlyphs">1.23</text>
<path d="M1199.5 537.5 l4.500 3.500 l-4.500 3.500z" fill="#fff" stroke="#000" stroke-width="1"/>
<text x="1198.5" y="588" font-size="12" fill="#000" text-anchor="start" font-weight="normal" textLength="20" lengthAdjust="spacingAndGlyphs">min</text>
<rect x="1197.5" y="592.5" width="37" height="37" fill="#fff6ea" stroke="#f6b478" stroke-width="1"/>
<rect x="1200" y="595" width="32" height="32" fill="#a8a8a8" stroke="#dc9a5e" stroke-width="2"/>
<rect x="1209" y="621.5" width="15" height="7" fill="#ffffd8"/>
<path d="M1208.5 628 v-6.500 h15 v6.500" fill="none" stroke="#f0a050" stroke-width="1"/>
<text x="1210" y="628" font-size="7.5" fill="#f08c1c" text-anchor="start" font-weight="bold" textLength="13" lengthAdjust="spacingAndGlyphs">DBL</text>
<path d="M1206.5 617 v-12.500 h19" fill="none" stroke="#787878" stroke-width="1"/>
<rect x="1207" y="605" width="18" height="11" fill="#fff"/>
<text x="1208.3" y="614" font-size="9.5" fill="#000" text-anchor="start" font-weight="normal" textLength="15.5" lengthAdjust="spacingAndGlyphs">1.23</text>
<path d="M1199.5 607.5 l4.500 3.500 l-4.500 3.500z" fill="#fff" stroke="#000" stroke-width="1"/>
<text x="127.5" y="728.5" font-size="12" fill="#000" text-anchor="start" font-weight="normal" textLength="55" lengthAdjust="spacingAndGlyphs">Numeric 2</text>
<rect x="126.500" y="733.500" width="31" height="15" fill="#ececff" stroke="#2424c4" stroke-width="1"/>
<rect x="129.500" y="736.500" width="25" height="9" fill="#fff" stroke="#2020c0" stroke-width="1"/><rect x="130" y="737" width="5" height="8" fill="#9090e0"/>
<path d="M130 738 l3.500 3 l-3.500 3z" fill="#000"/>
<text x="135.3" y="743.9" font-size="8.5" fill="#1010c0" text-anchor="start" font-weight="bold" textLength="15" lengthAdjust="spacingAndGlyphs" stroke="#1010c0" stroke-width="0.300">I32</text>
<rect x="49" y="778" width="14" height="14" fill="#fff" stroke="#1818a0" stroke-width="2"/>
<text x="56" y="789.5" font-size="13" fill="#1818a0" text-anchor="middle" font-weight="bold" stroke="#1818a0" stroke-width="0.500">i</text>
<text x="1177" y="743.5" font-size="12" fill="#000" text-anchor="start" font-weight="normal" textLength="21" lengthAdjust="spacingAndGlyphs">stop</text>
<rect x="1170" y="749" width="30" height="14" fill="#bfe3bf" stroke="#128012" stroke-width="2"/>
<rect x="1172.5" y="751.5" width="26" height="9" fill="#fff" stroke="#128012" stroke-width="1"/>
<rect x="1191" y="752" width="7" height="8" fill="#a4cca4"/>
<path d="M1195.5 753 l3.500 3 l-3.500 3z" fill="#000"/>
<text x="1179.7" y="759" font-size="8" fill="#0f500f" text-anchor="start" font-weight="bold" letter-spacing="1.600" stroke="#0f500f" stroke-width="0.300">TF</text>
<g opacity="0.840">
<path d="M1101 775 C1105 769 1118 768 1126 771 C1131 774 1134 777 1137 780 L1141 776 L1150 777 L1146 783 C1152 779 1157 774 1160 770 C1158 780 1154 790 1150 797 C1146 803 1139 806 1134 806 L1130 805 L1128 812 L1115 825 C1112 815 1114 803 1118 795 C1112 786 1106 780 1101 775 Z" fill="#fff" stroke="#e0e0e0" stroke-width="0.600" style="filter:drop-shadow(1px 1px 0.600px #a0a0a0)"/>
<text transform="translate(1161.5 788.75) skewX(-9)" x="0" y="0" font-size="25.5" font-weight="bold" fill="#fff" textLength="123" lengthAdjust="spacingAndGlyphs" stroke="#fff" stroke-width="0.900" paint-order="stroke" style="filter:drop-shadow(1px 1px 0 #b4b4b4) drop-shadow(1px 1px 0.600px #8c8c8c)">NATIONAL</text>
<text transform="translate(1154.5 812.5) skewX(-9)" x="0" y="0" font-size="22.5" font-weight="bold" fill="#fff" textLength="168" lengthAdjust="spacingAndGlyphs" stroke="#fff" stroke-width="0.900" paint-order="stroke" style="filter:drop-shadow(1px 1px 0 #b4b4b4) drop-shadow(1px 1px 0.600px #8c8c8c)">INSTRUMENTS</text>
<text transform="translate(1327 802) skewX(-9)" x="0" y="0" font-size="7" font-weight="bold" fill="#fff" stroke="#fff" stroke-width="0.900" paint-order="stroke" style="filter:drop-shadow(1px 1px 0 #b4b4b4) drop-shadow(1px 1px 0.600px #8c8c8c)">™</text>
<text transform="translate(1130 843.5) skewX(-9)" x="0" y="0" font-size="25.5" font-weight="bold" fill="#fff" textLength="88" lengthAdjust="spacingAndGlyphs" stroke="#fff" stroke-width="0.900" paint-order="stroke" style="filter:drop-shadow(1px 1px 0 #b4b4b4) drop-shadow(1px 1px 0.600px #8c8c8c)">LabVIEW</text>
<text transform="translate(1220 831) skewX(-9)" x="0" y="0" font-size="7" font-weight="bold" fill="#fff" stroke="#fff" stroke-width="0.900" paint-order="stroke" style="filter:drop-shadow(1px 1px 0 #b4b4b4) drop-shadow(1px 1px 0.600px #8c8c8c)">™</text>
<text transform="translate(1230 843.5) skewX(-9)" x="0" y="0" font-size="25.5" font-weight="bold" fill="#fff" textLength="186" lengthAdjust="spacingAndGlyphs" stroke="#fff" stroke-width="0.900" paint-order="stroke" style="filter:drop-shadow(1px 1px 0 #b4b4b4) drop-shadow(1px 1px 0.600px #8c8c8c)">Studentenversion</text>
</g>
<rect x="1262.500" y="777.500" width="15" height="15" fill="#fff" fill-opacity="0.850" stroke="#2a8a2a" stroke-width="1"/>
<path d="M1267.500 779.500h5l3.500 3.500v5l-3.500 3.500h-5l-3.500-3.500v-5z" fill="#f06070" stroke="#401010" stroke-width="1"/>
</svg>
<div id="title">
<svg class="appicon" width="18" height="18" viewBox="0 0 18 18" style="position:absolute;left:0;top:0"><rect x="4.500" y="3.500" width="12" height="13" fill="#1a1a1a"/><rect x="5.500" y="6" width="10" height="8" fill="#124a12"/><path d="M6 6 L14.500 10 L6 14z" fill="#ffe000"/><path d="M8 10h3.500M9.700 8.300v3.400" stroke="#503000" stroke-width="1.200"/><path d="M5 4.700h11M5 15.300h11" stroke="#e0e0e0" stroke-width="1.200" stroke-dasharray="1 1"/><rect x="2" y="8.500" width="3.500" height="1.500" fill="#c02040"/><rect x="2" y="12" width="3.500" height="1.500" fill="#2030c8"/></svg>
<div class="cap">2010_09_25_Projektarbeit_Testbetrieb.vi Blockdiagramm</div>
<div id="wbtn"><div class="wb min"><i></i></div><div class="wb max"><i></i><b></b></div><div class="wb cls"><span>x</span></div></div>
</div>
<div id="menubar"><svg width="460" height="20" viewBox="0 0 460 20" style="position:absolute;left:0;top:0">
<text x="7" y="12.700" font-size="12" textLength="27" lengthAdjust="spacingAndGlyphs"><tspan text-decoration="underline">D</tspan>atei</text>
<text x="48.5" y="12.700" font-size="12" textLength="55" lengthAdjust="spacingAndGlyphs"><tspan text-decoration="underline">B</tspan>earbeiten</text>
<text x="118.5" y="12.700" font-size="12" textLength="39.5" lengthAdjust="spacingAndGlyphs"><tspan text-decoration="underline">A</tspan>nsicht</text>
<text x="172.5" y="12.700" font-size="12" textLength="36.5" lengthAdjust="spacingAndGlyphs"><tspan text-decoration="underline">P</tspan>rojekt</text>
<text x="223.5" y="12.700" font-size="12" textLength="55" lengthAdjust="spacingAndGlyphs">Ausf<tspan text-decoration="underline">ü</tspan>hren</text>
<text x="292" y="12.700" font-size="12" textLength="58.5" lengthAdjust="spacingAndGlyphs"><tspan text-decoration="underline">W</tspan>erkzeuge</text>
<text x="364" y="12.700" font-size="12" textLength="38.5" lengthAdjust="spacingAndGlyphs"><tspan text-decoration="underline">F</tspan>enster</text>
<text x="416" y="12.700" font-size="12" textLength="25.5" lengthAdjust="spacingAndGlyphs"><tspan text-decoration="underline">H</tspan>ilfe</text>
</svg></div>
<div id="toolbar">
<div class="tb" style="left:51px;width:22px"><svg width="22" height="20" viewBox="0 0 22 20"><path d="M5.600 8.500H10V4.800L15.500 10.400L10 16V12.300H5.600z" fill="#fff" stroke="#000" stroke-width="1.300" stroke-linejoin="miter"/></svg></div>
<div class="tb" style="left:73px;width:21px"><svg width="21" height="20" viewBox="0 0 21 20"><path d="M5.500 4.700H15.500V8H18L14.500 12.300L11 8H12.500V7.700H8.500V10H5.500z" fill="#fff" stroke="#000" stroke-width="1.200"/><path d="M15 16.300H5V13H2.500L6 8.700L9.500 13H8V13.300H12V11H15z" fill="#fff" stroke="#000" stroke-width="1.200"/></svg></div>
<div class="tb flat" style="left:98px;width:21px"><svg width="21" height="20" viewBox="0 0 21 20"><path d="M7.5 3h6l4.5 4.5v6l-4.5 4.5h-6l-4.5-4.5v-6z" fill="#f47c7c" stroke="#ecc4bc" stroke-width="1.200"/></svg></div>
<div class="tb" style="left:120px;width:21px"><svg width="21" height="20" viewBox="0 0 21 20"><rect x="5" y="5" width="4" height="10" fill="#000"/><rect x="11" y="5" width="4" height="10" fill="#000"/></svg></div>
<div class="tb" style="left:145px;width:21px"><svg width="21" height="20" viewBox="0 0 21 20"><path d="M10.5 3.5a4.6 4.6 0 0 1 3 8.2c-.8.8-1 1.4-1 2.3h-4c0-.9-.2-1.5-1-2.3a4.6 4.6 0 0 1 3-8.2z" fill="#fff" stroke="#000" stroke-width="1.2"/><path d="M8.8 8l1.7 2.5 1.7-2.5M10.500 10.500v3.500" fill="none" stroke="#000" stroke-width="0.8"/><rect x="8.300" y="14" width="4.400" height="3.200" fill="#e8c840" stroke="#000" stroke-width="0.8"/><path d="M8.3 15.600h4.400" stroke="#000" stroke-width="0.700"/></svg></div>
<div class="tb" style="left:171px;width:22px"><svg width="22" height="20" viewBox="0 0 22 20"><circle cx="6.500" cy="6" r="2.800" fill="#fff" stroke="#000" stroke-width="1"/><path d="M6.500 4.500v3M6.500 9v5M4 11.500h5" stroke="#000" stroke-width="1" fill="none"/><rect x="11.500" y="4" width="7" height="5" fill="#c0c0c0" stroke="#808080" stroke-width="1"/><path d="M2.500 15.500h7" stroke="#1040d0" stroke-width="1.400"/><rect x="9.500" y="13.500" width="4" height="4" fill="#fff" stroke="#208020" stroke-width="1"/><path d="M13.500 15.500h4" stroke="#20a020" stroke-width="1.400"/><path d="M16.500 13l3 2.500-3 2.500z" fill="#20a020"/></svg></div>
<div class="tb" style="left:197px;width:21px"><svg width="21" height="20" viewBox="0 0 21 20"><path d="M4.500 3v8.500h4" stroke="#000" stroke-width="2.400" fill="none"/><path d="M8 7.500l4.500 4-4.500 4z" fill="#000"/><rect x="12" y="10.500" width="5.500" height="5.500" fill="#ffffa0" stroke="#000" stroke-width="1.300"/></svg></div>
<div class="tb" style="left:219px;width:21px"><svg width="21" height="20" viewBox="0 0 21 20"><path d="M4.500 9.500v-4h9" stroke="#404040" stroke-width="2.600" fill="none"/><path d="M12.500 1.500l5 4-5 4z" fill="#000"/><rect x="4" y="9" width="8" height="7.500" fill="#fff" stroke="#000" stroke-width="1.300"/><rect x="6.500" y="11.500" width="5.500" height="5" fill="#ffffa0" stroke="#000" stroke-width="1.300"/></svg></div>
<div class="tb flat" style="left:241px;width:20px"><svg width="20" height="20" viewBox="0 0 20 20"><rect x="3.500" y="10.500" width="6" height="5.500" fill="#e8e8e8" stroke="#b0b0b0" stroke-width="1.200"/><path d="M10 13.500h4.500v-5" stroke="#b8b8b8" stroke-width="2.400" fill="none"/><path d="M10.500 9l4-4.500 4 4.500z" fill="#b8b8b8"/></svg></div>
<div class="tb font" style="left:264px;width:173px"><svg width="150" height="19" viewBox="0 0 150 19" style="left:0;top:0"><text x="7.500" y="13.200" font-size="12" textLength="141.500" lengthAdjust="spacingAndGlyphs">15pt Anwendungsschriftart</text></svg><em></em><svg width="7" height="4" viewBox="0 0 7 4" style="position:absolute;left:159px;top:8px"><path d="M0 0h7l-3.500 4z" fill="#000"/></svg></div>
<div class="tb" style="left:440px;width:34px"><svg width="32" height="20" viewBox="0 0 32 20"><rect x="4.500" y="2.500" width="5" height="5" fill="#20a020" stroke="#000" stroke-width="1"/><path d="M7 9v5M4.500 11.500h5M3 15.500h8" stroke="#000" stroke-width="1" fill="none" stroke-dasharray="2 1"/><rect x="10.500" y="9.500" width="9" height="5" fill="#ffff80" stroke="#000" stroke-width="1"/><path d="M21 8.500h7l-3.500 4z" fill="#000"/></svg></div>
<div class="tb" style="left:476px;width:34px"><svg width="33" height="20" viewBox="0 0 33 20"><path d="M6 3.500c4-1.500 10-1.500 14 0" stroke="#000" stroke-width="1" fill="none"/><rect x="4" y="9" width="3" height="3" fill="#000"/><rect x="9.500" y="6.500" width="4" height="9" fill="#ffff60" stroke="#000" stroke-width="1"/><rect x="15.500" y="9.500" width="5" height="6" fill="#20a040" stroke="#000" stroke-width="1"/><path d="M23 8.500h7l-3.500 4z" fill="#000"/></svg></div>
<div class="tb" style="left:515px;width:34px"><svg width="34" height="20" viewBox="0 0 34 20"><path d="M5.500 10.500a6 5.500 0 0 1 10.500-3.500l2-2v6h-6l2-2a3.200 3 0 0 0-5.500 1.500z" fill="#383838"/><path d="M21.500 9.500a6 5.500 0 0 1-10.500 3.500l-2 2v-6h6l-2 2a3.200 3 0 0 0 5.500-1.500z" fill="#9a9a9a"/><path d="M24 8.500h7l-3.500 4z" fill="#000"/></svg></div>
<div class="tb" style="left:551px;width:26px"><svg width="25" height="20" viewBox="0 0 25 20"><path d="M4 4.500l8 4-8 4z" fill="#ffe820" stroke="#000" stroke-width="0.800"/><path d="M6 8.500h3M7.500 7v3" stroke="#000" stroke-width="0.900"/><path d="M19.500 1.500l-1.500 9" stroke="#504030" stroke-width="1.600"/><path d="M14 10.500l7 1 1.500 6.500-12-1.500z" fill="#b07830" stroke="#604010" stroke-width="0.700"/><path d="M12 16l2-4M15 17l1.500-5M18.500 17.500l.5-5" stroke="#704818" stroke-width="0.700"/></svg></div>
<div class="tb" style="left:1377px;width:21px"><svg width="21" height="20" viewBox="0 0 21 20"><path d="M6.800 7.200c0-2.300 1.600-3.600 3.700-3.600s3.700 1.300 3.700 3.300c0 2.600-3.300 2.700-3.300 5.600" fill="none" stroke="#000" stroke-width="2.600" stroke-linecap="round"/><path d="M6.800 7.200c0-2.300 1.600-3.600 3.700-3.600s3.700 1.300 3.700 3.300c0 2.600-3.300 2.700-3.300 5.600" fill="none" stroke="#ffee30" stroke-width="1.100" stroke-linecap="round"/><circle cx="10.900" cy="15.800" r="1.500" fill="#ffee30" stroke="#000" stroke-width="0.900"/></svg></div>
</div>
<div id="iconpane"><div id="viicon"><svg width="30" height="30" viewBox="0 0 30 30"><rect x="2" y="2" width="18" height="14" fill="#d8c8a0" stroke="#000" stroke-width="1"/><rect x="3" y="3" width="12" height="9" fill="#000"/><path d="M4 8c1-5 2-5 3 0s2 5 3 0 2-5 3 0" fill="none" stroke="#20e020" stroke-width="1"/><circle cx="17.500" cy="6" r="1" fill="none" stroke="#c02020" stroke-width="0.700"/><circle cx="17.500" cy="9.500" r="1" fill="none" stroke="#c02020" stroke-width="0.700"/><path d="M3 16.500h5" stroke="#2030a0" stroke-width="1"/><path d="M4 17c1 4 8 4 9 0" stroke="#2030a0" stroke-width="1" fill="none"/><circle cx="9.500" cy="17" r="1.700" fill="none" stroke="#e02020" stroke-width="1"/><path d="M11 16.500h8" stroke="#e06020" stroke-width="1"/><path d="M18 12.500l7 4-7 4z" fill="#ffe820" stroke="#c8b400" stroke-width="0.800"/><path d="M25 16.500h3" stroke="#e08020" stroke-width="1"/><path d="M19.500 16.500h3M21 15v3" stroke="#000" stroke-width="0.900"/><text x="23" y="28" font-size="9" fill="#000">2</text></svg></div></div>
<div id="vscroll"><div class="thumb"><i></i></div><svg class="au" width="7" height="4" viewBox="0 0 7 4"><path d="M0 4l3.500-4 3.500 4z" fill="#505050"/></svg><svg class="ad" width="7" height="4" viewBox="0 0 7 4"><path d="M0 0h7l-3.500 4z" fill="#505050"/></svg></div>
<div id="botedge"></div><div id="leftedge"></div>
<div id="hscroll"><div class="tab"><svg width="100" height="15" viewBox="0 0 100 15"><text x="6.500" y="11.500" font-size="12" textLength="91" lengthAdjust="spacingAndGlyphs">Studentenversion</text></svg></div><div class="thumb"><i></i></div><svg class="al" width="4" height="7" viewBox="0 0 4 7"><path d="M4 0v7l-4-3.500z" fill="#505050"/></svg><svg class="ar" width="4" height="7" viewBox="0 0 4 7"><path d="M0 0v7l4-3.500z" fill="#505050"/></svg></div>
<div id="blackline"></div>
</div>
</body>
</html>
